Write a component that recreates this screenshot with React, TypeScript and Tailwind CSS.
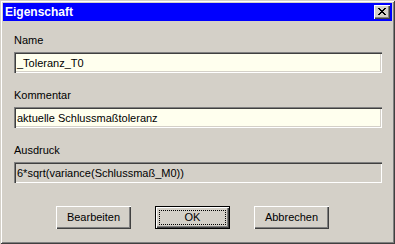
const FACE = 'bg-[#d4d0c8]'

const SUNKEN =
  'shadow-[inset_1px_1px_0_#808080,inset_2px_2px_0_#404040,inset_-1px_-1px_0_#ffffff,inset_-2px_-2px_0_#d4d0c8]'

const RAISED =
  'shadow-[inset_1px_1px_0_#ffffff,inset_-1px_-1px_0_#404040,inset_-2px_-2px_0_#808080]'

function CloseGlyph() {
  // 8x7 pixel cross, like the classic caption button
  const rows = ['XX....XX', '.XX..XX.', '..XXXX..', '...XX...', '..XXXX..', '.XX..XX.', 'XX....XX']
  return (
    <svg width="8" height="7" viewBox="0 0 8 7" shapeRendering="crispEdges">
      {rows.map((r, y) =>
        r.split('').map((c, x) =>
          c === 'X' ? <rect key={`${x}-${y}`} x={x} y={y} width="1" height="1" fill="#000" /> : null,
        ),
      )}
    </svg>
  )
}

function Field({ label, value, readOnly = false, top }: { label: string; value: string; readOnly?: boolean; top: string }) {
  return (
    <div className={`flex flex-col ${top}`}>
      <span className="leading-[13px] h-[13px]">{label}</span>
      <div
        className={`mt-[5px] h-[21px] w-[368px] flex items-center pl-[3px] pt-[1px] ${SUNKEN} ${
          readOnly ? FACE : 'bg-[#ffffee]'
        }`}
      >
        <span className="leading-[13px] whitespace-nowrap">{value}</span>
      </div>
    </div>
  )
}

function PushButton({ children, isDefault = false }: { children: string; isDefault?: boolean }) {
  if (isDefault) {
    return (
      <div className="w-[75px] h-[23px] border border-black bg-[#d4d0c8]">
        <div className={`w-full h-full p-[3px] ${RAISED}`}>
          <div className="w-full h-full border border-dotted border-black flex items-center justify-center">
            <span className="leading-[13px]">{children}</span>
          </div>
        </div>
      </div>
    )
  }
  return (
    <div className={`w-[75px] h-[23px] flex items-center justify-center ${FACE} ${RAISED}`}>
      <span className="leading-[13px]">{children}</span>
    </div>
  )
}

export default function App() {
  return (
    <div
      className={`w-[395px] h-[244px] ${FACE} p-[3px] flex flex-col text-[11px] text-black font-['Liberation_Sans',Arial,sans-serif] shadow-[inset_1px_1px_0_#d4d0c8,inset_-1px_-1px_0_#404040,inset_2px_2px_0_#ffffff,inset_-2px_-2px_0_#808080]`}
    >
      {/* caption */}
      <div className="h-[18px] bg-[#0000ff] flex items-center justify-between pl-[2px] pr-[2px]">
        <span className="text-white font-bold text-[12px] leading-[14px]">Eigenschaft</span>
        <div className={`w-[16px] h-[14px] flex items-center justify-center pb-[1px] ${FACE} ${RAISED}`}>
          <CloseGlyph />
        </div>
      </div>

      {/* body */}
      <div className="flex flex-col pl-[11px]">
        <Field label="Name" value="_Toleranz_T0" top="mt-[13px]" />
        <Field label="Kommentar" value="aktuelle Schlussmaßtoleranz" top="mt-[16px]" />
        <Field label="Ausdruck" value="6*sqrt(variance(Schlussmaß_M0))" readOnly top="mt-[16px]" />

        <div className="flex gap-[24px] mt-[23px] pl-[42px]">
          <PushButton>Bearbeiten</PushButton>
          <PushButton isDefault>OK</PushButton>
          <PushButton>Abbrechen</PushButton>
        </div>
      </div>
    </div>
  )
}
